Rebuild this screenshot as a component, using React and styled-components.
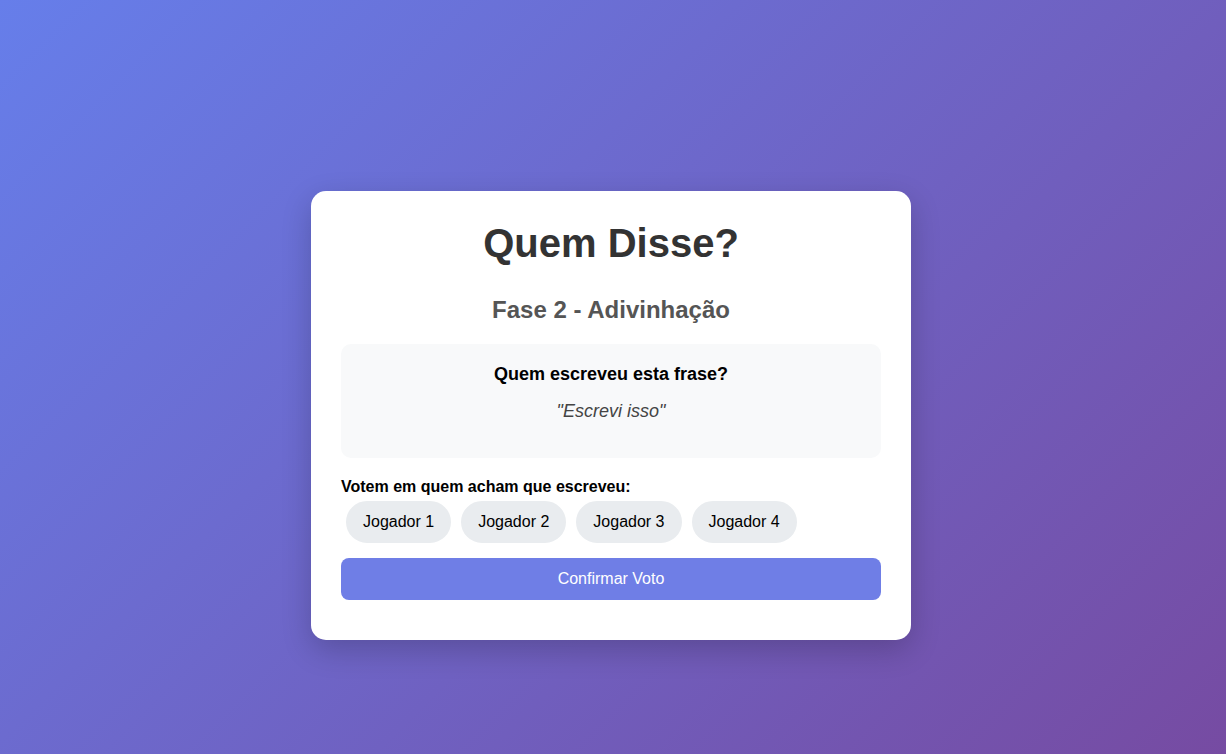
import React, { useState } from 'react'
import styled, { createGlobalStyle } from 'styled-components'

const GlobalStyle = createGlobalStyle`
  html, body {
    margin: 0;
    padding: 0;
  }
  body {
    font-family: "Liberation Sans", Arial, sans-serif;
    background: linear-gradient(135deg, #667eea 0%, #764ba2 100%);
    min-height: 100vh;
  }
`

const Page = styled.div`
  min-height: 100vh;
  box-sizing: border-box;
  display: flex;
  justify-content: center;
  align-items: flex-start;
  padding: 191px 4px 0 0;
`

const Card = styled.div`
  width: 600px;
  box-sizing: border-box;
  background: #fff;
  border-radius: 15px;
  padding: 30px 30px 40px;
  box-shadow: 0 10px 30px rgba(0, 0, 0, 0.2);
`

const Title = styled.h1`
  margin: 0 0 30px;
  font-size: 40px;
  font-weight: bold;
  color: #333;
  text-align: center;
`

const Phase = styled.h2`
  margin: 0 0 20px;
  font-size: 24px;
  font-weight: bold;
  color: #555;
  text-align: center;
`

const PhraseBox = styled.div`
  background: #f8f9fa;
  border-radius: 10px;
  padding: 20px;
  text-align: center;
  margin-bottom: 20px;
`

const Question = styled.h3`
  margin: 0;
  font-size: 18px;
  font-weight: bold;
  color: #000;
`

const Phrase = styled.p`
  margin: 16px 0;
  font-size: 18px;
  font-style: italic;
  color: #444;
`

const Label = styled.div`
  font-size: 16px;
  font-weight: bold;
  color: #000;
`

const Options = styled.div`
  display: flex;
  flex-wrap: wrap;
`

const Option = styled.button`
  margin: 5px;
  padding: 10px 15px;
  font-family: inherit;
  font-size: 16px;
  color: #000;
  background: ${({ selected }) => (selected ? '#d6dbf7' : '#e9ecef')};
  border: 2px solid ${({ selected }) => (selected ? '#667eea' : '#e9ecef')};
  border-radius: 25px;
  cursor: pointer;
`

const Confirm = styled.button`
  display: block;
  width: 100%;
  margin-top: 10px;
  height: 42px;
  font-family: inherit;
  font-size: 16px;
  color: #fff;
  background: #6f7ee6;
  border: none;
  border-radius: 8px;
  cursor: pointer;
`

const players = ['Jogador 1', 'Jogador 2', 'Jogador 3', 'Jogador 4']

export default function App() {
  const [vote, setVote] = useState(null)

  return (
    <Page>
      <GlobalStyle />
      <Card>
        <Title>Quem Disse?</Title>
        <Phase>Fase 2 - Adivinhação</Phase>
        <PhraseBox>
          <Question>Quem escreveu esta frase?</Question>
          <Phrase>"Escrevi isso"</Phrase>
        </PhraseBox>
        <Label>Votem em quem acham que escreveu:</Label>
        <Options>
          {players.map(p => (
            <Option key={p} selected={vote === p} onClick={() => setVote(p)}>
              {p}
            </Option>
          ))}
        </Options>
        <Confirm>Confirmar Voto</Confirm>
      </Card>
    </Page>
  )
}
